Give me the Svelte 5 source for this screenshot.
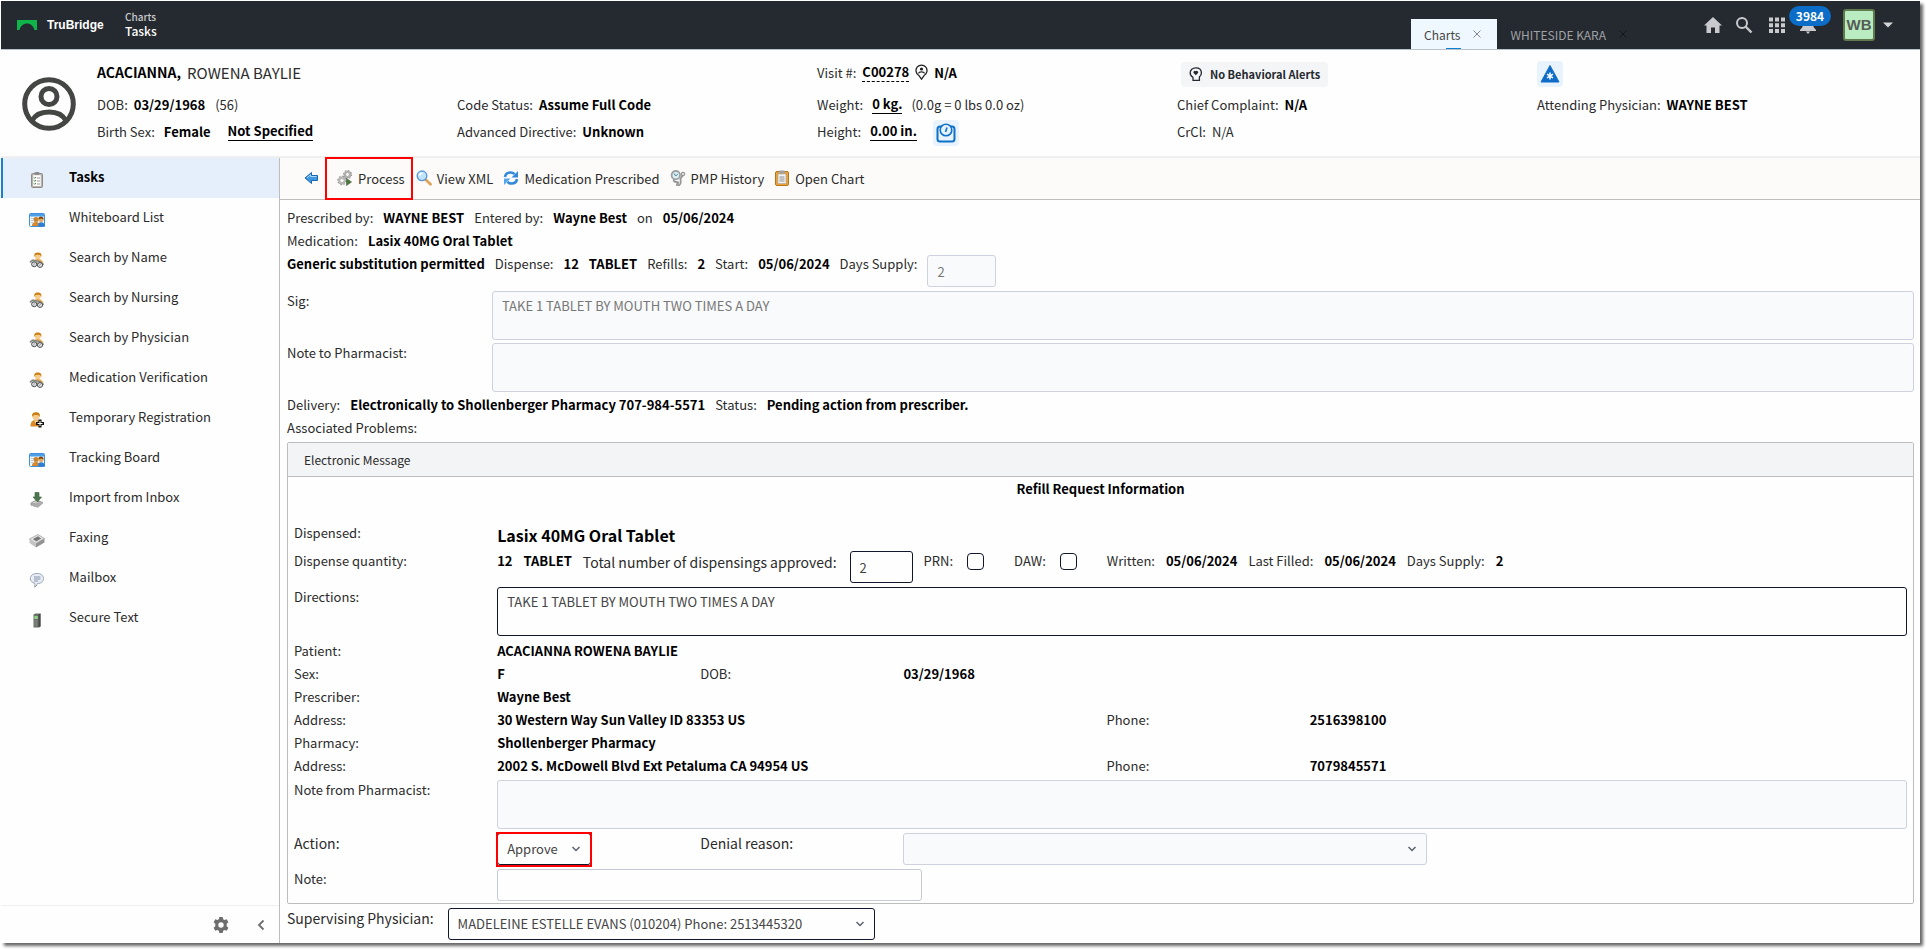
<script>
  const menu = [
    { label: 'Tasks', icon: 'clipboard' },
    { label: 'Whiteboard List', icon: 'board' },
    { label: 'Search by Name', icon: 'search-person' },
    { label: 'Search by Nursing', icon: 'search-person' },
    { label: 'Search by Physician', icon: 'search-person' },
    { label: 'Medication Verification', icon: 'search-person' },
    { label: 'Temporary Registration', icon: 'add-person' },
    { label: 'Tracking Board', icon: 'board' },
    { label: 'Import from Inbox', icon: 'import' },
    { label: 'Faxing', icon: 'tray' },
    { label: 'Mailbox', icon: 'bubble' },
    { label: 'Secure Text', icon: 'phone' }
  ];

  const actions = [
    { label: 'Process', icon: 'gears' },
    { label: 'View XML', icon: 'magnifier' },
    { label: 'Medication Prescribed', icon: 'refresh' },
    { label: 'PMP History', icon: 'stethoscope' },
    { label: 'Open Chart', icon: 'chart' }
  ];

  let active = $state('Tasks');
  let sig = $state('TAKE 1 TABLET BY MOUTH TWO TIMES A DAY');
  let directions = $state('TAKE 1 TABLET BY MOUTH TWO TIMES A DAY');
  let dispensings = $state('2');
  let prn = $state(false);
  let daw = $state(false);
  let action = $state('Approve');
  let note = $state('');
</script>

{#snippet icon(name)}
  <svg class="icon" viewBox="0 0 16 16" aria-hidden="true">
    {#if name === 'clipboard'}
      <rect x="2.500" y="1.500" width="11" height="14" rx="1" fill="#b9b4ab" stroke="#8f8c86" />
      <rect x="4.200" y="3.200" width="7.600" height="10.800" fill="#fdfdfd" />
      <rect x="5.500" y="0" width="5" height="3" rx="1" fill="#8d8d8d" />
      <path d="M5 5.500l.8.8 1-1.300M5 8.500l.8.8 1-1.300M5 11.500l.8.8 1-1.300" fill="none" stroke="#3a7a3a" />
      <path d="M8 6h3M8 9h3M8 12h3" stroke="#999" />
    {:else if name === 'board'}
      <rect x=".5" y="1.500" width="15" height="13" rx="1" fill="#eef6ff" stroke="#3f8fdc" />
      <rect x="1" y="2" width="14" height="2.500" fill="#4f9fe8" />
      <path d="M2 6.500h4M2 8.500h2M2 10.500h2" stroke="#b8cde2" />
      <circle cx="7" cy="7.600" r="2.500" fill="#c9822c" />
      <path d="M3 14c0-3 1.500-4 4-4s4 1 4 4z" fill="#d08a35" />
      <circle cx="12" cy="7.600" r="2.500" fill="#e8a960" />
      <path d="M9.500 7.400c-.3-2.200 1-3 2.500-3s2.800.8 2.500 3c-1-1-4-1-5 0z" fill="#7b4a12" />
      <path d="M9 14.500c0-3 1.200-4.200 3-4.200s4 1 4 4.200z" fill="#2f7fd0" />
    {:else if name === 'search-person'}
      <path d="M4.500 12C4 8.500 6 7 8.500 7s5.500 1 6 5z" fill="#e8a74c" />
      <circle cx="8.800" cy="4.200" r="3" fill="#f6c98c" />
      <path d="M5.400 5C4.700 1.200 6.500.4 8.800.4s4.200.8 3.500 4.600C11.500 3 10.500 2.800 8.800 2.800S6.200 3 5.400 5z" fill="#c98010" />
      <path d="M1 10.500l2.500-2 4 .8 3 1 4 3" fill="none" stroke="#b5b8b8" stroke-width="2.400" />
      <path d="M1 10l3-2 4 1 3 .5 3.500 2.500" fill="none" stroke="#666" stroke-width=".8" />
      <ellipse cx="5.200" cy="12.300" rx="2.600" ry="2.400" fill="#dfe6e8" stroke="#4d4d4d" />
      <ellipse cx="11" cy="13" rx="2.600" ry="2.400" fill="#dfe6e8" stroke="#4d4d4d" />
      <path d="M4.300 13l1.800-1.600M10 13.700l1.800-1.600" stroke="#8b9799" />
    {:else if name === 'add-person'}
      <path d="M1.500 14.500C1.500 9.500 3.500 8 7 8s5 1.500 5.500 6.500z" fill="#d98a26" />
      <path d="M5 8.500l2 3 2-3z" fill="#f8dcb0" />
      <circle cx="7" cy="4.800" r="3.400" fill="#f6c98c" />
      <path d="M3.200 5C2.500 1.400 4.500.3 7 .3s4.500 1.100 3.800 4.700C9.500 3 9 3 7 3S4.500 3 3.200 5z" fill="#c98010" />
      <path d="M9.500 7.500h3v2.500h2.500v3h-2.500v2.500h-3v-2.500H7v-3h2.500z" fill="#111" />
      <path d="M11 9v5M8.500 11.500h5" stroke="#fff" />
    {:else if name === 'import'}
      <path d="M2 11l5-2.500 7 2-5 4.500-7-2z" fill="#e4e4e4" stroke="#8c8c8c" />
      <path d="M2 11v2.500l7 2 5-4.500v-1" fill="#aaa" />
      <path d="M6 .5h4v4.500h2.500L8.500 10 4 5h2z" fill="#4d774c" stroke="#3a5a3a" stroke-width=".6" />
    {:else if name === 'tray'}
      <path d="M.5 7L9 2.500l6.500 4L7 11.500z" fill="#e3e3e3" stroke="#999" stroke-width=".7" />
      <path d="M.5 7v4L7 15.500v-4z" fill="#c4c4c4" />
      <path d="M7 11.500v4l8.500-5v-4z" fill="#939393" />
      <path d="M4 7l5-2.700 3.200 2.200-5 3z" fill="#777" />
    {:else if name === 'bubble'}
      <path d="M8 1.500c4 0 6.500 2 6.500 5 0 3.200-2.700 5-6 5-.5 0-.3 2.600-3 3.500.6-1.300.6-2.600.2-3.800C3 10.500 1.300 9 1.300 6.600c0-3 2.700-5.100 6.700-5.100z" fill="#e8edf6" stroke="#98a2b3" />
      <path d="M5 5h6.500M5 7h6.500M5 9h4" stroke="#8792a8" />
    {:else if name === 'phone'}
      <path d="M4.500 2.500l2-1h5v13l-2 1h-5z" fill="#6b706a" />
      <path d="M9.500 2.500l2-1v13l-2 1z" fill="#454945" />
      <rect x="5.300" y="4" width="3.500" height="3" fill="#8fd08a" />
      <path d="M5.500 9h3M5.500 11h3M5.500 13h3" stroke="#999" stroke-dasharray="1 .5" />
    {:else if name === 'back'}
      <path d="M2 8l6.500-5.500V5.500h6v5h-6v3z" fill="#3f97e0" stroke="#1a67b0" />
      <path d="M4 7.800l3.500-3V6.500h6" fill="none" stroke="#a9d6fa" />
    {:else if name === 'gears'}
      <circle cx="10.500" cy="4.500" r="2.600" fill="none" stroke="#b0b0b0" stroke-width="2.400" />
      <circle cx="10.500" cy="4.500" r="4.100" fill="none" stroke="#868686" stroke-dasharray="1.600 1.600" />
      <circle cx="5" cy="10.500" r="2.800" fill="none" stroke="#b8b8b8" stroke-width="2.400" />
      <circle cx="5" cy="10.500" r="4.300" fill="none" stroke="#868686" stroke-dasharray="1.600 1.700" />
      <path d="M9.500 8.500l5 3.500-5 3.500z" fill="#4c7745" stroke="#37632f" stroke-width=".6" />
    {:else if name === 'magnifier'}
      <path d="M9.500 9.500l5 4.800" stroke="#e0a45a" stroke-width="2.800" stroke-linecap="round" />
      <circle cx="6" cy="5.800" r="4.800" fill="#bfe3fb" stroke="#5d97d8" stroke-width="1.400" />
      <path d="M3.500 5.500c.3-1.500 1.500-2.300 3-2.200" fill="none" stroke="#fff" stroke-width="1.400" />
    {:else if name === 'refresh'}
      <path d="M2 7C2.500 3.800 5 2.500 7.500 2.500c1.700 0 3 .6 4 1.700" fill="none" stroke="#3289da" stroke-width="2.600" />
      <path d="M15 1v6.400H8.500z" fill="#3289da" />
      <path d="M14 9c-.5 3.200-3 4.500-5.500 4.500-1.700 0-3-.6-4-1.700" fill="none" stroke="#3289da" stroke-width="2.600" />
      <path d="M1 15V8.600h6.500z" fill="#56a8ec" />
    {:else if name === 'stethoscope'}
      <path d="M5 9.500c-2.500.5-1 2.500 1 2.500s3 .5 1.500 1.700 0 2.300 2 1.300S10.500 11 10.500 9s2.500-2 2.500-5" fill="none" stroke="#969696" stroke-width="1.800" />
      <circle cx="5.800" cy="5.200" r="4.200" fill="#dcecef" stroke="#9aa1a5" stroke-width="1.800" />
      <path d="M4 3.500L5.800 6l2-2" fill="none" stroke="#4c8a9f" />
      <circle cx="13" cy="4" r="1.800" fill="#ddd" stroke="#888" />
    {:else if name === 'chart'}
      <rect x="1.500" y="1.500" width="13" height="14" rx="1.500" fill="#e9a23c" stroke="#b8741c" />
      <rect x="4" y="4" width="8" height="9.500" fill="#f4f4f4" stroke="#a5a5a5" stroke-width=".6" />
      <path d="M5.500 7h5M5.500 9h5M5.500 11h5" stroke="#8d8d8d" />
      <rect x="5" y=".5" width="6" height="3" rx="1" fill="#a2a2a2" />
    {/if}
  </svg>
{/snippet}

{#snippet chevron()}
  <svg class="chevron" viewBox="0 0 10 10" aria-hidden="true">
    <path d="M1.500 3l3.500 3.500L8.500 3" fill="none" stroke="#5c6270" stroke-width="1.500" />
  </svg>
{/snippet}

<div class="app">
  <header class="topbar">
    <a class="brand" href="#home">
      <svg class="logo" viewBox="0 0 20 10" aria-hidden="true">
        <path d="M0 0h20v10h-2.500C16.500 6 13.500 3.500 10 3.500S3.500 6 2.500 10H0z" fill="#0fb54a" />
      </svg>
      TruBridge
    </a>
    <div class="crumbs">
      <span class="crumb">Charts</span>
      <span>Tasks</span>
    </div>
    <nav class="tabs">
      <div class="tab current">
        <a href="#charts">Charts</a>
        <button class="close" aria-label="Close Charts">
          <svg viewBox="0 0 8 8"><path d="M.5.5l7 7M7.500.5l-7 7" fill="none" stroke="currentColor" /></svg>
        </button>
      </div>
      <div class="tab">
        <a href="#whiteside">WHITESIDE KARA</a>
        <button class="close" aria-label="Close Whiteside Kara">
          <svg viewBox="0 0 8 8"><path d="M.5.5l7 7M7.500.5l-7 7" fill="none" stroke="currentColor" /></svg>
        </button>
      </div>
    </nav>
    <div class="tools">
      <button class="tool" aria-label="Home">
        <svg viewBox="0 0 18 18"><path d="M9 1L0 9.500h2.500V17h4.500v-5.500h4V17h4.500V9.500H18z" fill="#c9cacd" /></svg>
      </button>
      <button class="tool" aria-label="Search">
        <svg viewBox="0 0 18 18">
          <circle cx="7" cy="7" r="5" fill="none" stroke="#c9cacd" stroke-width="2" />
          <path d="M10.500 10.500l6 6" stroke="#c9cacd" stroke-width="2.400" />
        </svg>
      </button>
      <button class="tool apps" aria-label="Applications">
        <svg viewBox="0 0 18 18">
          <path d="M1 1.500h4v4H1zM7 1.500h4v4H7zM13 1.500h4v4h-4zM1 7.200h4v4H1zM7 7.200h4v4H7zM13 7.200h4v4h-4zM1 13h4v4H1zM7 13h4v4H7zM13 13h4v4h-4z" fill="#c9cacd" />
        </svg>
      </button>
      <button class="tool bell" aria-label="Notifications">
        <svg viewBox="0 0 18 18">
          <path d="M9 1a5.500 5.500 0 0 0-5.500 5.500V11L1 14v1h16v-1l-2.500-3V6.500A5.500 5.500 0 0 0 9 1zM6.800 15.500h4.400L9 18z" fill="#c9cacd" />
        </svg>
        <span class="count">3984</span>
      </button>
      <button class="user">
        <span class="avatar">WB</span>
        <svg class="caret" viewBox="0 0 10 6" aria-hidden="true"><path d="M0 .5h10L5 5.500z" fill="#d4d5d7" /></svg>
      </button>
    </div>
  </header>

  <section class="patient">
    <svg class="portrait" viewBox="0 0 54 54" aria-hidden="true">
      <g fill="none" stroke="#444644" stroke-width="5">
        <circle cx="27" cy="27" r="24.300" />
        <circle cx="27" cy="19.500" r="8" />
        <path d="M10 44c3-6.500 9.500-9 17-9s14 2.500 17 9" />
      </g>
    </svg>
    <div class="facts">
      <div class="fact-col">
        <div class="fact name"><b>ACACIANNA,</b> ROWENA BAYLIE</div>
        <div class="fact">DOB: <b>03/29/1968</b> <span class="age">(56)</span></div>
        <div class="fact wide">Birth Sex: <b>Female</b> <a class="under spec" href="#spec">Not Specified</a></div>
      </div>
      <div class="fact-col">
        <div class="fact"></div>
        <div class="fact">Code Status: <b>Assume Full Code</b></div>
        <div class="fact">Advanced Directive: <b>Unknown</b></div>
      </div>
      <div class="fact-col">
        <div class="fact">
          Visit #: <a class="visit" href="#visit">C00278</a>
          <svg class="pin" viewBox="0 0 13 16" aria-hidden="true">
            <path d="M6.500 15.200L3.600 11.200A5.500 5.500 0 1 1 9.400 11.200z" fill="none" stroke="#222" stroke-width="1.300" />
            <circle cx="6.500" cy="5" r="1.600" fill="#222" />
            <path d="M3.500 9.400c.5-2 5.500-2 6 0" fill="none" stroke="#222" stroke-width="1.300" />
          </svg>
          <b>N/A</b>
        </div>
        <div class="fact wide">Weight: <a class="under" href="#weight">0 kg.</a> (0.0g = 0 lbs 0.0 oz)</div>
        <div class="fact wide">
          Height: <a class="under" href="#height">0.00 in.</a>
          <button class="tile scale" aria-label="Vitals">
            <svg viewBox="0 0 20 20">
              <rect x="1.500" y="3.500" width="17" height="15" rx="2.500" fill="none" stroke="#0e72c8" stroke-width="2" />
              <circle cx="10" cy="7" r="5.800" fill="#e8f3fe" stroke="#0e72c8" stroke-width="1.600" />
              <path d="M9.500 9l1.500-4.500" stroke="#0e72c8" stroke-width="1.600" />
            </svg>
          </button>
        </div>
      </div>
      <div class="fact-col">
        <div class="fact">
          <button class="alerts">
            <svg viewBox="0 0 14 14" aria-hidden="true">
              <path d="M4 13.300v-3C2 9.300 1.200 7.800 1.200 5.800 1.200 2.800 3.500.8 6.800.8s5.600 2 5.600 5c0 2-.8 3.300-2 4.300v3.200z" fill="none" stroke="#25292f" stroke-width="1.300" />
              <path d="M6.800 8.300L4.600 6a1.400 1.400 0 0 1 2.200-1.700A1.400 1.400 0 0 1 9 6z" fill="#25292f" />
            </svg>
            No Behavioral Alerts
          </button>
        </div>
        <div class="fact">Chief Complaint: <b>N/A</b></div>
        <div class="fact">CrCl: <span>N/A</span></div>
      </div>
      <div class="fact-col">
        <div class="fact">
          <button class="tile" aria-label="Allergies">
            <svg viewBox="0 0 20 20">
              <path d="M10 1.500L19 18H1z" fill="#0e6cc6" stroke="#0e6cc6" stroke-linejoin="round" />
              <path d="M10 8.500v7M7 10.200l6 3.600M13 10.200l-6 3.600" stroke="#fff" stroke-width="1.500" />
            </svg>
          </button>
        </div>
        <div class="fact">Attending Physician: <b>WAYNE BEST</b></div>
        <div class="fact"></div>
      </div>
    </div>
  </section>

  <div class="body">
    <aside class="sidebar">
      <nav class="menu">
        {#each menu as item}
          <button class="menu-item" class:active={active === item.label} onclick={() => (active = item.label)}>
            {@render icon(item.icon)}
            {item.label}
          </button>
        {/each}
      </nav>
      <div class="side-foot">
        <button class="foot-btn" aria-label="Settings">
          <svg viewBox="0 0 16 16">
            <path fill-rule="evenodd" d="M6.300 0h3.400l.5 2.300 1.300.7 2.200-.7 1.700 2.900-1.700 1.600v2.400l1.700 1.600-1.700 2.900-2.200-.7-1.300.7-.5 2.300H6.300l-.5-2.300-1.300-.7-2.200.7L.6 10.800l1.700-1.600V6.800L.6 5.200l1.700-2.900 2.200.7 1.300-.7zM8 5.300a2.700 2.700 0 1 0 0 5.400 2.700 2.700 0 0 0 0-5.400z" fill="#6e6e6e" />
          </svg>
        </button>
        <button class="foot-btn" aria-label="Collapse">
          <svg viewBox="0 0 16 16"><path d="M10.500 3.500L6 8l4.500 4.500" fill="none" stroke="#6e6e6e" stroke-width="1.800" /></svg>
        </button>
      </div>
    </aside>

    <main class="main">
      <div class="toolbar">
        <button class="action" aria-label="Back">{@render icon('back')}</button>
        {#each actions as item, i}
          <button class="action" class:marked={i === 0}>
            {@render icon(item.icon)}
            {item.label}
          </button>
        {/each}
      </div>

      <div class="order">
        <div class="line">
          <span>Prescribed by:</span><b>WAYNE BEST</b><span>Entered by:</span><b>Wayne Best</b><span>on</span><b>05/06/2024</b>
        </div>
        <div class="line"><span>Medication:</span><b>Lasix 40MG Oral Tablet</b></div>
        <div class="line">
          <b>Generic substitution permitted</b><span>Dispense:</span><b>12</b><b>TABLET</b><span>Refills:</span><b>2</b>
          <span>Start:</span><b>05/06/2024</b><label for="supply">Days Supply:</label>
          <input id="supply" class="field days" value="2" disabled />
        </div>
        <div class="grid">
          <label for="sig">Sig:</label>
          <textarea id="sig" class="field span7" bind:value={sig} disabled></textarea>
        </div>
        <div class="grid">
          <label for="to-pharm">Note to Pharmacist:</label>
          <textarea id="to-pharm" class="field span7" disabled></textarea>
        </div>
        <div class="line">
          <span>Delivery:</span><b>Electronically to Shollenberger Pharmacy 707-984-5571</b><span>Status:</span><b>Pending action from prescriber.</b>
        </div>
        <div class="line"><span>Associated Problems:</span></div>

        <section class="panel">
          <h2>Electronic Message</h2>
          <h3>Refill Request Information</h3>
          <div class="grid dispensed">
            <span>Dispensed:</span>
            <b class="drug span7">Lasix 40MG Oral Tablet</b>
          </div>
          <div class="grid">
            <span>Dispense quantity:</span>
            <div class="line bare span7">
              <b>12</b><b>TABLET</b>
              <label class="big" for="total">Total number of dispensings approved:</label>
              <input id="total" class="field total" bind:value={dispensings} />
              <label class="check">PRN: <input type="checkbox" bind:checked={prn} /></label>
              <label class="check">DAW: <input type="checkbox" bind:checked={daw} /></label>
              <span>Written:</span><b>05/06/2024</b><span>Last Filled:</span><b>05/06/2024</b><span>Days Supply:</span><b>2</b>
            </div>
          </div>
          <div class="grid">
            <label for="directions">Directions:</label>
            <textarea id="directions" class="field span7" bind:value={directions}></textarea>
          </div>
          <div class="details">
            <div class="grid"><span>Patient:</span><b class="span7">ACACIANNA ROWENA BAYLIE</b></div>
            <div class="grid"><span>Sex:</span><b>F</b><span>DOB:</span><b>03/29/1968</b></div>
            <div class="grid"><span>Prescriber:</span><b class="span7">Wayne Best</b></div>
            <div class="grid"><span>Address:</span><b class="span3">30 Western Way Sun Valley ID 83353 US</b><span>Phone:</span><b>2516398100</b></div>
            <div class="grid"><span>Pharmacy:</span><b class="span7">Shollenberger Pharmacy</b></div>
            <div class="grid"><span>Address:</span><b class="span3">2002 S. McDowell Blvd Ext Petaluma CA 94954 US</b><span>Phone:</span><b>7079845571</b></div>
          </div>
          <div class="grid">
            <label for="from-pharm">Note from Pharmacist:</label>
            <textarea id="from-pharm" class="field span7" disabled></textarea>
          </div>
          <div class="grid">
            <label class="big" for="action">Action:</label>
            <div class="pick approve">
              <select id="action" class="field" bind:value={action}>
                <option>Approve</option>
                <option>Deny</option>
              </select>
              {@render chevron()}
            </div>
            <label class="big" for="denial">Denial reason:</label>
            <div class="pick denial span3">
              <select id="denial" class="field" disabled><option></option></select>
              {@render chevron()}
            </div>
          </div>
          <div class="grid">
            <label for="note">Note:</label>
            <div class="span3"><input id="note" class="field note" bind:value={note} /></div>
          </div>
        </section>

        <div class="line super">
          <label class="big" for="super">Supervising Physician:</label>
          <div class="pick physician">
            <select id="super" class="field">
              <option>MADELEINE ESTELLE EVANS (010204) Phone: 2513445320</option>
            </select>
            {@render chevron()}
          </div>
        </div>
      </div>
    </main>
  </div>
</div>

<style>
  :global(body) {
    margin: 0;
    background: #fff;
  }

  .app {
    display: flex;
    flex-direction: column;
    min-height: calc(100vh - 8px);
    margin: 1px 7px 7px 1px;
    background: #fefefe;
    box-shadow: 3px 3px 3px rgba(0, 0, 0, 0.6);
    color: #2b2b2b;
    font-family: 'Noto Sans CJK SC', 'Open Sans', sans-serif;
    font-size: 13px;
    line-height: 23px;
  }

  .app * {
    box-sizing: border-box;
  }

  b {
    color: #000;
    font-weight: 700;
  }

  a {
    color: inherit;
    text-decoration: none;
  }

  button {
    padding: 0;
    border: 0;
    background: none;
    color: inherit;
    font: inherit;
    cursor: pointer;
  }

  svg {
    display: block;
    flex: none;
  }

  .icon {
    width: 16px;
    height: 16px;
  }

  /* top bar */
  .topbar {
    display: flex;
    height: 49px;
    border-bottom: 1px solid #b9c3cb;
    background: #252930;
    color: #fff;
  }

  .brand {
    display: flex;
    flex: none;
    align-items: center;
    gap: 10px;
    width: 124px;
    padding-left: 16px;
    font: 700 12px/20px 'Liberation Sans', sans-serif;
  }

  .logo {
    width: 20px;
    height: 10px;
  }

  .crumbs {
    display: flex;
    flex-direction: column;
    justify-content: center;
    padding-bottom: 2px;
    font-size: 12px;
    font-weight: 500;
    line-height: 14px;
  }

  .crumb {
    color: #c9cacd;
    font-size: 10px;
  }

  .tabs {
    display: flex;
    align-items: flex-end;
    margin-left: auto;
  }

  .tab {
    display: flex;
    align-items: center;
    gap: 13px;
    height: 30px;
    padding: 0 13px;
    color: #a0a2a6;
    font-size: 12px;
  }

  .tab.current {
    position: relative;
    padding-right: 16px;
    background: #f0f8ff;
    color: #444;
  }

  .tab.current::after {
    position: absolute;
    bottom: 0;
    left: 35px;
    width: 15px;
    height: 1px;
    background: #0e7fd0;
    content: '';
  }

  .close {
    width: 8px;
    color: #12151a;
  }

  .current .close {
    color: #888;
  }

  .tools {
    display: flex;
    align-items: center;
    margin-left: 64px;
    padding-right: 27px;
  }

  .tool {
    position: relative;
    width: 18px;
    margin-right: 13px;
  }

  .tool.apps {
    margin-left: 2px;
  }

  .tool.bell {
    margin-right: 26px;
  }

  .count {
    position: absolute;
    top: -10px;
    left: -10px;
    width: 42px;
    border-radius: 10px;
    background: #0b6dc7;
    color: #fff;
    font-size: 12px;
    font-weight: 700;
    line-height: 20px;
    text-align: center;
  }

  .user {
    display: flex;
    align-items: center;
    gap: 8px;
  }

  .avatar {
    width: 32px;
    border: 2px solid #5f7a4c;
    border-radius: 3px;
    background: #b9edc1;
    color: #565c56;
    font: 700 15px/28px 'Liberation Sans', sans-serif;
    text-align: center;
  }

  .caret {
    width: 10px;
    height: 6px;
  }

  /* patient banner */
  .patient {
    display: flex;
    gap: 21px;
    height: 108px;
    padding-left: 21px;
    border-bottom: 2px solid #efefef;
  }

  .portrait {
    width: 54px;
    height: 54px;
    margin-top: 27px;
  }

  .facts {
    display: grid;
    flex: 1;
    grid-template-columns: repeat(5, 1fr);
    padding-right: 23px;
  }

  .fact-col {
    display: grid;
    grid-template-rows: 32px 32px 22px;
    align-content: start;
    padding-top: 6px;
  }

  .fact {
    display: flex;
    align-items: center;
    gap: 6px;
    white-space: nowrap;
  }

  .fact.wide {
    gap: 9px;
  }

  .fact.name {
    font-size: 15px;
  }

  .name b {
    font-size: 14px;
  }

  .age {
    margin-left: 4px;
  }

  .under {
    border-bottom: 1px solid #000;
    color: #000;
    font-weight: 700;
    line-height: 18px;
  }

  .spec {
    margin-left: 8px;
  }

  .visit {
    border-bottom: 1px dashed #000;
    color: #000;
    font-weight: 700;
    line-height: 18px;
  }

  .pin {
    width: 13px;
    height: 16px;
  }

  .tile {
    display: grid;
    place-items: center;
    width: 26px;
    height: 26px;
    margin-top: 4px;
    border-radius: 4px;
    background: #e8f3fe;
  }

  .tile svg {
    width: 20px;
  }

  .scale {
    margin-left: 7px;
  }

  .alerts {
    display: flex;
    align-items: center;
    gap: 7px;
    margin: 4px 0 0 4px;
    padding: 1px 8px;
    border-radius: 4px;
    background: #f3f5f7;
    color: #25292f;
    font-size: 11px;
    font-weight: 700;
  }

  .alerts svg {
    width: 14px;
  }

  /* sidebar */
  .body {
    display: flex;
    flex: 1;
  }

  .sidebar {
    display: flex;
    flex: none;
    flex-direction: column;
    width: 279px;
    border-right: 1px solid #bdbdbd;
  }

  .menu {
    flex: 1;
  }

  .menu-item {
    display: flex;
    align-items: center;
    gap: 24px;
    width: 100%;
    height: 40px;
    padding: 0 0 3px 26px;
    border-left: 2px solid transparent;
    text-align: left;
  }

  .menu-item .icon {
    margin-top: 7px;
  }

  .menu-item.active {
    border-color: #1b7fca;
    background: #e5effc;
    color: #000;
    font-weight: 700;
  }

  .side-foot {
    display: flex;
    align-items: center;
    justify-content: flex-end;
    gap: 24px;
    height: 38px;
    padding-right: 10px;
    border-top: 1px solid #efefef;
  }

  .foot-btn {
    width: 16px;
  }

  /* main area */
  .main {
    flex: 1;
    min-width: 0;
  }

  .toolbar {
    display: flex;
    height: 42px;
    padding: 0 0 1px 18px;
    border-bottom: 1px solid #bdbdbd;
    background: #fdfbf9;
  }

  .action {
    position: relative;
    display: flex;
    align-items: center;
    gap: 5px;
    padding: 0 5px;
  }

  .action.marked {
    margin: 0 1px 0 8px;
  }

  .marked::after {
    position: absolute;
    inset: -1px -3px -2px -7px;
    border: 2px solid #f00;
    content: '';
  }

  .order {
    padding: 6px 0 0 1px;
  }

  .line {
    display: flex;
    align-items: flex-start;
    gap: 10px;
    padding: 0 6px;
    white-space: nowrap;
  }

  .line.bare {
    gap: 11px;
    padding: 0;
  }

  .grid {
    display: grid;
    grid-template-columns: repeat(8, 1fr);
    align-items: start;
  }

  .grid > * {
    min-width: 0;
    margin: 0 6px;
    white-space: nowrap;
  }

  .grid > .span7 {
    grid-column: span 7;
  }

  .grid > .span3 {
    grid-column: span 3;
  }

  .field {
    display: block;
    height: 32px;
    margin: 2px 0;
    padding: 0 9px;
    border: 1px solid #10162b;
    border-radius: 3px;
    outline: none;
    background: #fefefe;
    color: #444;
    font: inherit;
    line-height: 20px;
  }

  .field:disabled {
    border-color: #cdd2de;
    background: #f9fafc;
    color: #777;
    opacity: 1;
  }

  .grid > textarea.field {
    height: 49px;
    margin: 2px 6px 1px;
    padding: 4px 9px;
    resize: none;
  }

  .days {
    width: 69px;
    margin-top: 3px;
  }

  .total {
    width: 63px;
    margin-left: 2px;
  }

  .note {
    width: 425px;
    border-color: #c5cad6;
  }

  .panel {
    margin: 3px 6px 0;
    border: 1px solid #bdbdbd;
    border-radius: 2px;
  }

  h2,
  h3 {
    margin: 0;
    font-size: 13px;
  }

  h2 {
    padding: 5px 16px;
    border-bottom: 1px solid #bdbdbd;
    background: #f3f4f6;
    font-size: 12px;
    font-weight: 400;
  }

  h3 {
    color: #000;
    text-align: center;
  }

  .dispensed {
    padding: 21px 0 2px;
  }

  .dispensed .drug {
    margin-top: 3px;
    font-size: 16px;
  }

  .big {
    font-size: 14px;
    line-height: 27px;
  }

  .check {
    display: flex;
    gap: 14px;
    margin-right: 19px;
  }

  .check input {
    width: 17px;
    height: 17px;
    margin: 4px 0 0;
    border: 1px solid #10162b;
    border-radius: 4px;
    appearance: none;
  }

  .check input:checked {
    background: #0b6dc7;
  }

  .details {
    padding: 2px 0 1px;
  }

  .pick {
    position: relative;
    display: grid;
    align-items: center;
  }

  .pick > * {
    grid-area: 1 / 1;
  }

  .pick select {
    width: 100%;
    margin: 3px 0 2px;
    appearance: none;
  }

  .chevron {
    z-index: 1;
    justify-self: end;
    width: 10px;
    margin-right: 10px;
    pointer-events: none;
  }

  .approve {
    width: 94px;
  }

  .approve::after {
    position: absolute;
    inset: 2px -1px 0;
    border: 2px solid #f00;
    content: '';
    pointer-events: none;
  }

  .denial {
    width: 524px;
  }

  .super {
    gap: 14px;
    padding-top: 1px;
  }

  .physician {
    width: 427px;
  }
</style>
